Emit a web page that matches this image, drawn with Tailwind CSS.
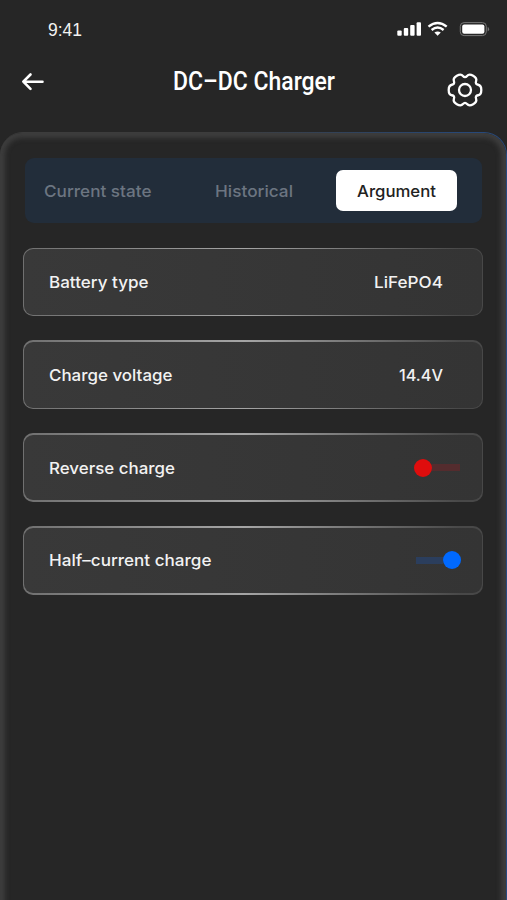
<!DOCTYPE html>
<html lang="en">
<head>
<meta charset="utf-8">
<title>DC-DC Charger</title>
<script src="https://cdn.jsdelivr.net/npm/@tailwindcss/browser@4"></script>
</head>
<body class="bg-[#262626] overflow-hidden">
<div class="w-[507px] h-[900px] flex flex-col bg-[#262626] text-[#f2f2f2] font-['Inter',sans-serif] overflow-hidden">
  <div class="h-[58px] shrink-0 flex items-center justify-between pl-[48px] pr-[17px]">
    <span class="text-[17.5px] leading-6 pt-px font-['Liberation_Sans',sans-serif]">9:41</span>
    <svg class="w-[94px] h-[20px]" viewBox="396 19 94 20" fill="none">
      <g fill="#fff">
        <rect x="397.3" y="30.5" width="4.4" height="5.2" rx="1"/>
        <rect x="403.8" y="28" width="4.4" height="7.7" rx="1"/>
        <rect x="410.2" y="25" width="4.4" height="10.7" rx="1"/>
        <rect x="416.6" y="22.2" width="4.4" height="13.5" rx="1"/>
        <path d="M434.4 32.6Q437.6 30.2 440.8 32.6L437.6 35.7Z"/>
      </g>
      <path d="M428.5 26.6Q437.6 19.2 446.7 26.6M431.6 30Q437.6 25.2 443.6 30" stroke="#fff" stroke-width="2.4"/>
      <rect x="460.3" y="22.6" width="26" height="13" rx="3.8" stroke="#777"/>
      <rect x="462.2" y="24.4" width="22.2" height="9.4" rx="2" fill="#fff"/>
      <path d="M487.7 27v4.4q1.4-.6 1.4-2.2t-1.4-2.2" fill="#777"/>
    </svg>
  </div>
  <div class="h-[74px] shrink-0 flex items-start justify-between pl-[21px] pr-[23px]">
    <svg class="w-[38px] h-[20px] mt-[14px]" viewBox="0 0 38 20" fill="none" stroke="#fff" stroke-width="2.6" stroke-linecap="round" stroke-linejoin="round"><path d="M21.5 9.7H2.5M9.5 2.5L2.3 9.7l7.2 7.2"/></svg>
    <h1 class="w-[163px] mt-[8px] ml-[2px] whitespace-nowrap"><svg class="block w-[163px] h-[32px] overflow-visible" viewBox="0 0 163 32"><text x="1" y="24.4" textLength="162" lengthAdjust="spacingAndGlyphs" fill="#fff" font-size="25" font-weight="500" class="font-['Roboto',sans-serif]">DC–DC Charger</text></svg></h1>
    <svg class="w-[38px] h-[38px] mt-[13px]" viewBox="-19 -19 38 38" fill="none" stroke="#fff" stroke-width="2.3" stroke-linejoin="round">
      <path d="M16.3 0Q16.3 4.7 13.15 5.25Q10 5.8 11.1 8.8Q12.2 11.8 8.15 14.15Q4.1 16.5 2.05 14.05Q0 11.6-2.05 14.05Q-4.1 16.5-8.15 14.15Q-12.2 11.8-11.1 8.8Q-10 5.8-13.15 5.25Q-16.3 4.7-16.3 0Q-16.3-4.7-13.15-5.25Q-10-5.8-11.1-8.8Q-12.2-11.8-8.15-14.15Q-4.1-16.5-2.05-14.05Q0-11.6 2.05-14.05Q4.1-16.5 8.15-14.15Q12.2-11.8 11.1-8.8Q10-5.8 13.15-5.25Q16.3-4.7 16.3 0Z"/>
      <circle r="6"/>
    </svg>
  </div>
  <div class="flex-1 min-h-0 rounded-t-[23px] pt-px pr-[1.5px] bg-[linear-gradient(90deg,#3c3c3c_45%,#29466f_85%,#264a80)]">
    <main class="h-[790px] rounded-t-[22px] bg-[#262626] shadow-[inset_0_0_5px_5px_#3d3d3d] pl-[23px] pt-[25px]">
      <nav class="ml-[2px] w-[457px] h-[65px] rounded-[9px] bg-[#222d3a] flex items-center text-[16.5px] font-medium text-[#6c7581]">
        <span class="ml-[18.5px] w-[108px]"><svg class="block w-[108px] h-[24px] overflow-visible"><text x="0" y="18" textLength="107.5" lengthAdjust="spacingAndGlyphs" fill="currentColor">Current state</text></svg></span>
        <span class="ml-[63.5px] w-[78px]"><svg class="block w-[78px] h-[24px] overflow-visible"><text x="0" y="18" textLength="78" lengthAdjust="spacingAndGlyphs" fill="currentColor">Historical</text></svg></span>
        <span class="ml-[43px] w-[121px] h-[41px] rounded-[7px] bg-white text-[#222] flex items-center justify-center"><svg class="block w-[79px] h-[24px] overflow-visible"><text x="0" y="18" textLength="79" lengthAdjust="spacingAndGlyphs" fill="currentColor">Argument</text></svg></span>
      </nav>
      <section class="mt-[24.5px] flex flex-col gap-[24.4px] w-[460px] text-[16.5px] font-medium">
        <div class="h-[68.5px] rounded-[10px] p-[1.4px] bg-[linear-gradient(90deg,#707070,#a5a5a5_48%,#484848_95%)]">
          <div class="h-full rounded-[9px] bg-linear-to-r from-[#393939] to-[#343434] flex items-center justify-between pl-[24.5px] pr-[39px]">
            <svg class="block w-[100px] h-[24px] overflow-visible"><text x="0" y="17.8" textLength="99.5" lengthAdjust="spacingAndGlyphs" fill="currentColor">Battery type</text></svg>
            <svg class="block w-[69px] h-[24px] overflow-visible"><text x="0" y="17.8" textLength="69" lengthAdjust="spacingAndGlyphs" fill="currentColor">LiFePO4</text></svg>
          </div>
        </div>
        <div class="h-[68.5px] rounded-[10px] p-[1.4px] bg-[linear-gradient(90deg,#707070,#a5a5a5_48%,#484848_95%)]">
          <div class="h-full rounded-[9px] bg-linear-to-r from-[#393939] to-[#343434] flex items-center justify-between pl-[24.5px] pr-[39px]">
            <svg class="block w-[124px] h-[24px] overflow-visible"><text x="0" y="17.8" textLength="123.5" lengthAdjust="spacingAndGlyphs" fill="currentColor">Charge voltage</text></svg>
            <svg class="block w-[44px] h-[24px] overflow-visible"><text x="0" y="17.8" textLength="44" lengthAdjust="spacingAndGlyphs" fill="currentColor">14.4V</text></svg>
          </div>
        </div>
        <div class="h-[68.5px] rounded-[10px] p-[1.4px] bg-[linear-gradient(90deg,#707070,#a5a5a5_48%,#484848_95%)]">
          <div class="h-full rounded-[9px] bg-linear-to-r from-[#393939] to-[#343434] flex items-center justify-between pl-[24.5px] pr-[22px]">
            <svg class="block w-[126px] h-[24px] overflow-visible"><text x="0" y="17.8" textLength="126" lengthAdjust="spacingAndGlyphs" fill="currentColor">Reverse charge</text></svg>
            <span class="flex items-center"><span class="w-[18px] h-[18px] rounded-full bg-[#df0d0d]"></span><span class="w-[28px] h-[7.5px] bg-[#542c2e]"></span></span>
          </div>
        </div>
        <div class="h-[68.5px] rounded-[10px] p-[1.4px] bg-[linear-gradient(90deg,#707070,#a5a5a5_48%,#484848_95%)]">
          <div class="h-full rounded-[9px] bg-linear-to-r from-[#393939] to-[#343434] flex items-center justify-between pl-[24.5px] pr-[20.5px]">
            <svg class="block w-[163px] h-[24px] overflow-visible"><text x="0" y="18.2" textLength="162.5" lengthAdjust="spacingAndGlyphs" fill="currentColor">Half–current charge</text></svg>
            <span class="flex items-center"><span class="w-[27.5px] h-[7.5px] bg-[#2b3e5d]"></span><span class="w-[18px] h-[18px] rounded-full bg-[#0069ff]"></span></span>
          </div>
        </div>
      </section>
    </main>
  </div>
</div>
</body>
</html>
